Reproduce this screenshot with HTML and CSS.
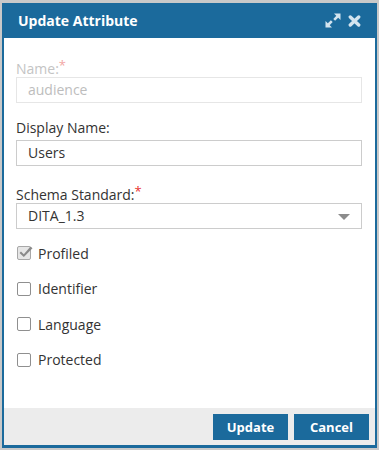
FILE: index.html
```html
<!DOCTYPE html>
<html>
<head>
<meta charset="utf-8">
<link rel="stylesheet" href="styles.css">
</head>
<body>
<div class="dialog">
  <div class="header">
    <span class="title">Update Attribute</span>
    <div class="tools">
      <svg class="ico-expand" width="16" height="15" viewBox="0 0 16 15">
        <path d="M9 0.5 H15.5 V7 Z" fill="#d3e4ef"/>
        <path d="M0.5 8 V14.5 H7 Z" fill="#d3e4ef"/>
        <path d="M13 3 L9.2 6.8 M3 12 L6.8 8.2" stroke="#d3e4ef" stroke-width="2.6" fill="none"/>
      </svg>
      <svg class="ico-close" width="13" height="12" viewBox="0 0 13 12">
        <path d="M2.3 2 L10.7 10 M10.7 2 L2.3 10" stroke="#d3e4ef" stroke-width="3.4" stroke-linecap="round" fill="none"/>
      </svg>
    </div>
  </div>
  <div class="body">
    <div class="field">
      <label class="lbl disabled">Name:<span class="req light">*</span></label>
      <div class="input disabled-input">audience</div>
    </div>
    <div class="field">
      <label class="lbl">Display Name:</label>
      <div class="input">Users</div>
    </div>
    <div class="field">
      <label class="lbl">Schema Standard:<span class="req">*</span></label>
      <div class="input select">DITA_1.3<span class="caret"></span></div>
    </div>
    <div class="checks">
      <div class="check">
        <span class="box checked">
          <svg width="15" height="15" viewBox="0 0 15 15"><path d="M3 6.5 L5.8 9.3 L12.5 1.5 L14.5 3.3 L5.8 12 L1.5 8 Z" fill="#8a8a8a"/></svg>
        </span>
        <span>Profiled</span>
      </div>
      <div class="check"><span class="box"></span><span>Identifier</span></div>
      <div class="check"><span class="box"></span><span>Language</span></div>
      <div class="check"><span class="box"></span><span>Protected</span></div>
    </div>
  </div>
  <div class="footer">
    <button class="btn">Update</button>
    <button class="btn">Cancel</button>
  </div>
</div>
</body>
</html>
```
FILE: styles.css
```css
html, body {
  margin: 0;
  padding: 0;
}
body {
  background: #c9c9c9;
  padding: 3px 0 0 2px;
  font-family: "Open Sans", "Noto Sans", sans-serif;
  font-size: 14px;
  color: #333;
}
.dialog {
  width: 371px;
  height: 442px;
  border: 2px solid #1b6a9c;
  border-top: none;
  border-bottom-width: 3px;
  display: flex;
  flex-direction: column;
  background: #fff;
}
.header {
  height: 35px;
  background: #1b6a9c;
  display: flex;
  align-items: center;
  justify-content: space-between;
  padding: 0 14px 0 14px;
  margin: 0 -2px;
}
.title {
  color: #fff;
  font-weight: bold;
  font-size: 14px;
  padding-left: 2px;
}
.tools {
  display: flex;
  align-items: center;
  gap: 7px;
  padding-right: 2px;
}
.ico-expand { display: block; margin-top: -1px; }
.ico-close { display: block; margin-top: 1px; }
.body {
  flex: 1;
  padding: 17px 13px 0 12px;
  display: flex;
  flex-direction: column;
}
.field {
  display: flex;
  flex-direction: column;
  gap: 2px;
  margin-bottom: 15px;
}
.lbl {
  line-height: 20px;
  height: 20px;
}
.lbl.disabled { color: #c4c4c4; }
.req { color: #e8322f; vertical-align: 4px; font-size: 13px; }
.req.light { color: #f2a6a4; }
.input {
  height: 24px;
  border: 1px solid #cccccc;
  line-height: 24px;
  padding-left: 11px;
  color: #333;
  position: relative;
}
.disabled-input {
  color: #bdbdbd;
  border-color: #e6e6e6;
}
.select .caret {
  position: absolute;
  right: 11px;
  top: 10px;
  width: 0;
  height: 0;
  border-left: 6px solid transparent;
  border-right: 6px solid transparent;
  border-top: 6px solid #8c8c8c;
}
.checks {
  display: flex;
  flex-direction: column;
  gap: 15.6px;
  margin-top: -1px;
}
.check {
  display: flex;
  align-items: center;
  height: 20px;
  gap: 7px;
  padding-left: 1px;
}
.box {
  width: 12px;
  height: 12px;
  border: 1px solid #8f8f8f;
  border-radius: 2px;
  background: #fff;
  position: relative;
  flex: none;
}
.box.checked {
  background: #e6e6e6;
  border-color: #a8a8a8;
}
.box svg {
  position: absolute;
  left: -0.5px;
  top: -2.5px;
}
.footer {
  height: 37px;
  background: #ececec;
  display: flex;
  justify-content: flex-end;
  align-items: flex-start;
  padding: 6px 6px 0 0;
  box-sizing: border-box;
  gap: 6px;
}
.btn {
  width: 75px;
  height: 26px;
  border: none;
  background: #1b6a9c;
  color: #fff;
  font-family: "Open Sans", "Noto Sans", sans-serif;
  font-weight: bold;
  font-size: 13px;
  padding: 0;
}
```
